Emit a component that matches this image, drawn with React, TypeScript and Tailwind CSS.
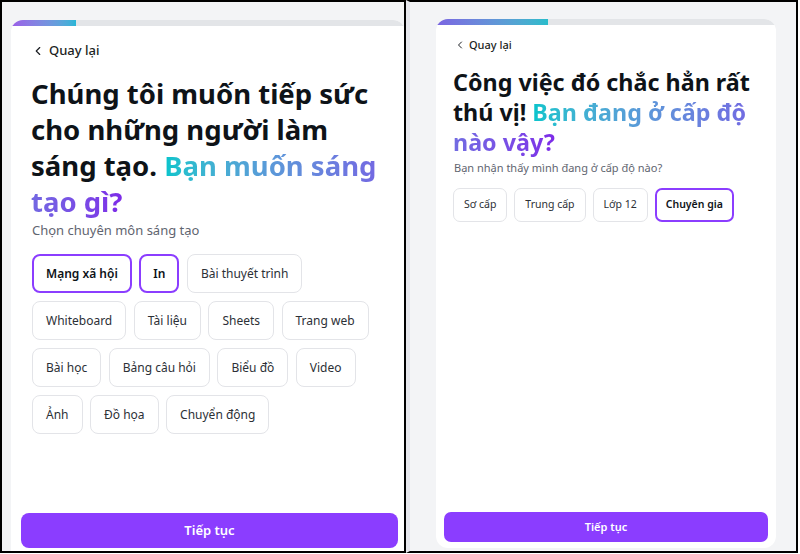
import React from "react";
import { ChevronLeft } from "lucide-react";

const leftChips: { label: string; selected?: boolean }[][] = [
  [{ label: "Mạng xã hội", selected: true }, { label: "In", selected: true }, { label: "Bài thuyết trình" }],
  [{ label: "Whiteboard" }, { label: "Tài liệu" }, { label: "Sheets" }, { label: "Trang web" }],
  [{ label: "Bài học" }, { label: "Bảng câu hỏi" }, { label: "Biểu đồ" }, { label: "Video" }],
  [{ label: "Ảnh" }, { label: "Đồ họa" }, { label: "Chuyển động" }],
];

const rightChips = [
  { label: "Sơ cấp" },
  { label: "Trung cấp" },
  { label: "Lớp 12" },
  { label: "Chuyên gia", selected: true },
];

function LeftChip({ label, selected }: { label: string; selected?: boolean }) {
  return selected ? (
    <div className="h-[39px] px-[12px] flex items-center whitespace-nowrap rounded-[8px] border-2 border-[#8b3dff] text-[12px] font-semibold text-[#0e1318]">
      {label}
    </div>
  ) : (
    <div className="h-[39px] px-[13px] flex items-center whitespace-nowrap rounded-[8px] border border-[#e3e4e8] text-[12px] text-[#2c3036]">
      {label}
    </div>
  );
}

function RightChip({ label, selected }: { label: string; selected?: boolean }) {
  return selected ? (
    <div className="h-[34px] px-[9px] flex items-center whitespace-nowrap rounded-[7px] border-2 border-[#8b3dff] text-[10.5px] font-semibold text-[#0e1318]">
      {label}
    </div>
  ) : (
    <div className="h-[34px] px-[10px] flex items-center whitespace-nowrap rounded-[7px] border border-[#e3e4e8] text-[10.5px] text-[#2c3036]">
      {label}
    </div>
  );
}

export default function App() {
  return (
    <div className="w-[800px] h-[554px] flex bg-white font-['Noto_Sans',sans-serif]">
      {/* Left screenshot */}
      <div className="w-[406px] h-[553px] border-2 border-black bg-[#f3f4f6] overflow-hidden pl-[9px] pt-[18px] shrink-0">
        <div className="w-[394px] h-[538px] bg-white rounded-t-[12px] flex flex-col overflow-hidden">
          <div className="h-[6px] bg-[#e3e5e8] shrink-0">
            <div className="h-full w-[65px] bg-gradient-to-r from-[#9a5ce8] to-[#26b6d6]" />
          </div>
          <div className="px-[21px] pt-[16px]">
            <div className="flex items-center gap-[4px] h-[18px] text-[13px] font-medium text-[#1c1f24]">
              <ChevronLeft size={14} strokeWidth={2} className="-ml-[1px]" />
              <span>Quay lại</span>
            </div>
            <h1 className="mt-[16px] text-[27.5px] leading-[36px] font-bold text-[#0e1318] -ml-[1px]">
              Chúng tôi muốn tiếp sức cho những người làm sáng tạo.{" "}
              <span className="bg-gradient-to-r from-[#00c4cc] to-[#7d2ae8] bg-clip-text text-transparent [box-decoration-break:slice]">
                Bạn muốn sáng tạo gì?
              </span>
            </h1>
            <p className="mt-[1px] text-[13px] leading-[18px] text-[#5f6570]">Chọn chuyên môn sáng tạo</p>
            <div className="mt-[15px] flex flex-col gap-[8px]">
              {leftChips.map((row, i) => (
                <div key={i} className="flex gap-[7.5px]">
                  {row.map((c) => (
                    <LeftChip key={c.label} label={c.label} selected={c.selected} />
                  ))}
                </div>
              ))}
            </div>
          </div>
          <div className="flex-1" />
          <div className="pl-[10px] pr-[7px] pb-[10px]">
            <div className="h-[35px] rounded-[8px] bg-[#8b3dff] flex items-center justify-center text-[13px] font-semibold text-white">
              Tiếp tục
            </div>
          </div>
        </div>
      </div>

      {/* Right screenshot */}
      <div className="w-[392px] h-[553px] border-y-2 border-r-2 border-black border-l-4 border-l-[#e5e6ec] bg-[#f3f4f6] pl-[26px] pt-[17px] shrink-0">
        <div className="w-[340px] h-[529px] bg-white rounded-[12px] flex flex-col overflow-hidden">
          <div className="h-[6px] bg-[#e3e5e8] shrink-0">
            <div className="h-full w-[112px] bg-gradient-to-r from-[#7a64e2] to-[#27bccb]" />
          </div>
          <div className="pl-[18px] pr-[12px] pt-[12px]">
            <div className="flex items-center gap-[3px] h-[16px] text-[11px] font-medium text-[#1c1f24]">
              <ChevronLeft size={12} strokeWidth={2} />
              <span>Quay lại</span>
            </div>
            <h1 className="mt-[14px] text-[23.3px] leading-[30px] font-bold text-[#0e1318] -ml-[1px]">
              Công việc đó chắc hẳn rất thú vị!{" "}
              <span className="bg-gradient-to-r from-[#00c4cc] to-[#7d2ae8] bg-clip-text text-transparent [box-decoration-break:slice]">
                Bạn đang ở cấp độ nào vậy?
              </span>
            </h1>
            <p className="mt-[3px] text-[11px] leading-[16px] text-[#5f6570]">
              Bạn nhận thấy mình đang ở cấp độ nào?
            </p>
            <div className="mt-[12px] flex gap-[7px] -ml-[1px]">
              {rightChips.map((c) => (
                <RightChip key={c.label} label={c.label} selected={c.selected} />
              ))}
            </div>
          </div>
          <div className="flex-1" />
          <div className="px-[8px] pb-[6px]">
            <div className="h-[30px] rounded-[7px] bg-[#8b3dff] flex items-center justify-center text-[11px] font-semibold text-white">
              Tiếp tục
            </div>
          </div>
        </div>
      </div>
    </div>
  );
}
